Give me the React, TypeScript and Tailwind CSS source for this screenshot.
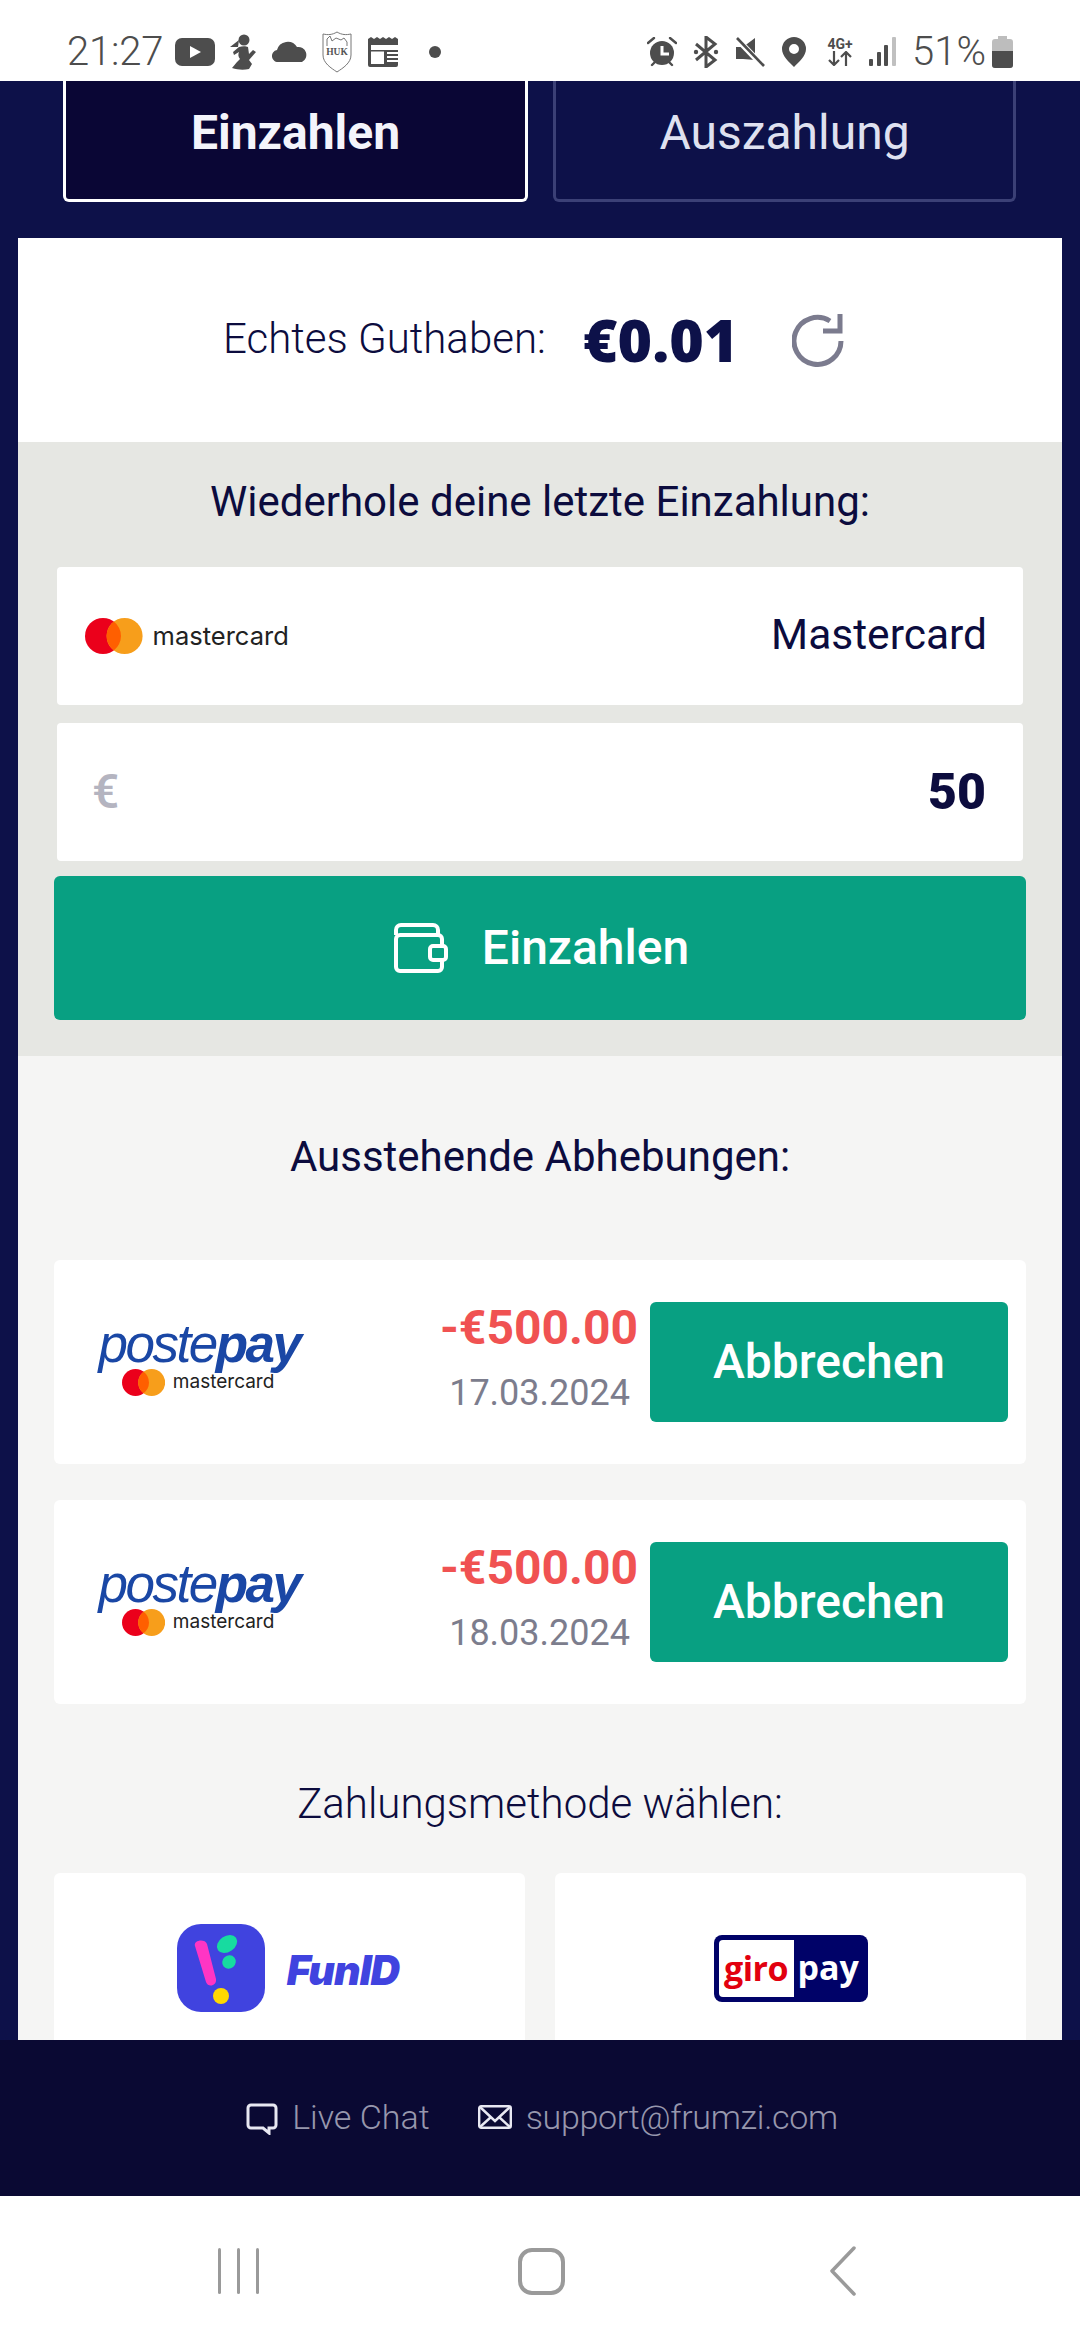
import React from "react";

const G = "#4d4d4d";

function McCircles({ h }: { h: number }) {
  return (
    <svg width={h * 1.6} height={h} viewBox="0 0 32 20" className="shrink-0">
      <circle cx="10" cy="10" r="10" fill="#eb001b" />
      <circle cx="22" cy="10" r="10" fill="#f79e1b" />
      <path d="M16 2a10 10 0 0 1 0 16a10 10 0 0 1 0-16z" fill="#ff5f00" />
    </svg>
  );
}

function Postepay() {
  return (
    <div className="w-[206px] flex flex-col items-center font-['Liberation_Sans',sans-serif] mt-[-4px]">
      <div className="italic text-[#1a47a5] text-[53px] leading-[44px] tracking-[-2.5px] whitespace-nowrap mt-[-3px]">
        poste<span className="font-bold">pay</span>
      </div>
      <div className="flex items-center gap-[8px] mt-[3px] ml-[-2px]">
        <McCircles h={27} />
        <span className="font-['Inter',sans-serif] text-[19px] leading-[20px] text-[#222]">mastercard</span>
      </div>
    </div>
  );
}

function Withdrawal({ date }: { date: string }) {
  return (
    <div className="h-[204px] bg-white rounded-[6px] flex items-center pl-[42px] pr-[18px]">
      <Postepay />
      <div className="flex-1 flex flex-col items-end">
        <div className="text-[48px] leading-[52px] font-bold text-[#f05252] mt-[-9px]">-€500.00</div>
        <div className="text-[36px] leading-[42px] text-[#7c7d8d] mt-[18px] mr-[8px]">{date}</div>
      </div>
      <button className="ml-[12px] w-[358px] h-[120px] rounded-[6px] bg-[#08a082] text-white text-[48px] font-medium">
        Abbrechen
      </button>
    </div>
  );
}

function StatusLeft() {
  return (
    <div className="flex items-center">
      <span className="text-[40px] tracking-[-0.2px] text-[#4d4d4d] font-['Roboto',sans-serif] font-light w-[108px] ml-[67px] leading-none">21:27</span>
      <svg width="40" height="28" viewBox="0 0 40 28">
        <rect width="40" height="28" rx="7" fill={G} />
        <path d="M15 8l11 6l-11 6z" fill="#fff" />
      </svg>
      <svg width="28" height="36" viewBox="0 0 28 36" className="ml-[14px]">
        <circle cx="15" cy="6" r="5.5" fill={G} />
        <path d="M10 6L1 13l8 0z" fill={G} />
        <path d="M10 13c3-1 7-1 9 0l1 7l4-4l3 2l-7 8l3 4l-3 5c-5 1-11 1-17-1l5-6l3-3c-2-2-2-5-1-7l-5 3l-1-3z" fill={G} />
      </svg>
      <svg width="36" height="21" viewBox="0 0 36 21" className="ml-[15px]">
        <path d="M7 21a6 6 0 0 1-2-12a11 11 0 0 1 20-3a8 8 0 0 1 5 15z" fill={G} />
      </svg>
      <svg width="30" height="42" viewBox="0 0 30 42" className="ml-[14px]">
        <path d="M15 1c5 3 9 3 14 2v21c0 8-8 13-14 17C9 37 1 32 1 24V3c5 1 9 1 14-2z" fill="#fff" stroke="#777" strokeWidth="1" />
        <path d="M5 15V8l3-3l2 5l4-3l5 2l3-2l3 4v4" fill="none" stroke="#777" strokeWidth="1" />
        <text x="15" y="24" textAnchor="middle" fontSize="9.5" fontWeight="700" fontFamily="Liberation Serif, serif" fill="#555">HUK</text>
      </svg>
      <svg width="33" height="30" viewBox="0 0 33 30" className="ml-[16px]">
        <path d="M0 2l3-2l3 2l3-2l3 2l3-2l3 2l3-2l3 2l3-2l3 2v26a2 2 0 0 1-2 2H2a2 2 0 0 1-2-2z" fill={G} />
        <rect x="3" y="8" width="13" height="19" fill="#fff" />
        <rect x="3" y="8" width="27" height="5" fill="#fff" />
        <path d="M19 15h11v2H19zM19 19h11v2H19zM19 23h11v2H19z" fill="#fff" />
        <rect x="3" y="13" width="27" height="1.5" fill={G} />
      </svg>
      <div className="w-[12px] h-[12px] rounded-full bg-[#4d4d4d] ml-[28px]" />
    </div>
  );
}

function StatusRight() {
  return (
    <div className="flex items-center mr-[67px]">
      <svg width="30" height="30" viewBox="0 0 30 30">
        <circle cx="15" cy="16" r="12" fill={G} />
        <path d="M1 6l6-5M29 6l-6-5M5 28l3-3M25 28l-3-3" stroke={G} strokeWidth="2.4" strokeLinecap="round" />
        <path d="M15 9v8h7" stroke="#fff" strokeWidth="3" fill="none" />
      </svg>
      <svg width="26" height="32" viewBox="0 0 26 32" className="ml-[16px]">
        <path d="M3 8l19 16l-9 7V1l9 7L3 24" fill="none" stroke={G} strokeWidth="3" />
        <circle cx="3" cy="16" r="2.2" fill={G} />
        <circle cx="23" cy="16" r="2.2" fill={G} />
      </svg>
      <svg width="30" height="30" viewBox="0 0 30 30" className="ml-[16px]">
        <path d="M1 10h7L20 1v22L8 22H1z" fill={G} />
        <path d="M3 3l25 26" stroke="#fff" strokeWidth="6" />
        <path d="M2 1l27 28" stroke={G} strokeWidth="2.6" />
      </svg>
      <svg width="24" height="30" viewBox="0 0 24 30" className="ml-[17px]">
        <path fillRule="evenodd" d="M12 0a12 12 0 0 1 12 12c0 7-7 13-12 18C7 25 0 19 0 12A12 12 0 0 1 12 0zm0 7a5 5 0 1 0 0 10a5 5 0 0 0 0-10z" fill={G} />
      </svg>
      <div className="flex flex-col items-center ml-[18px] w-[32px]">
        <span className="text-[14px] leading-[14px] font-bold text-[#4d4d4d] font-['Roboto',sans-serif]">4G+</span>
        <svg width="26" height="15" viewBox="0 0 26 15">
          <path d="M7 0v13M2 9l5 5l5-5M19 15V2M14 6l5-5l5 5" fill="none" stroke={G} strokeWidth="2.2" />
        </svg>
      </div>
      <svg width="27" height="29" viewBox="0 0 27 29" className="ml-[13px]">
        <rect x="0" y="22" width="4" height="7" rx="1" fill={G} />
        <rect x="8" y="15" width="4" height="14" rx="1" fill={G} />
        <rect x="15" y="8" width="4" height="21" rx="1" fill={G} />
        <rect x="23" y="0" width="4" height="29" rx="1" fill="#c0c0c0" />
      </svg>
      <span className="text-[40px] leading-none text-[#4d4d4d] font-['Roboto',sans-serif] font-light ml-[16px] w-[76px]">51%</span>
      <svg width="21" height="32" viewBox="0 0 21 32" className="ml-[4px]">
        <path d="M6 0h9v3h3a3 3 0 0 1 3 3v23a3 3 0 0 1-3 3H3a3 3 0 0 1-3-3V6a3 3 0 0 1 3-3h3z" fill="#bdbdbd" />
        <path d="M0 15h21v14a3 3 0 0 1-3 3H3a3 3 0 0 1-3-3z" fill={G} />
      </svg>
    </div>
  );
}

export default function App() {
  return (
    <div className="w-[1080px] h-[2340px] flex flex-col bg-white overflow-hidden font-['Roboto',sans-serif]">
      <div className="h-[81px] shrink-0 bg-white flex items-center justify-between pt-[22px]">
        <StatusLeft />
        <StatusRight />
      </div>

      <div className="flex-1 min-h-0 bg-[#0d1149] flex flex-col">
        <div className="h-[157px] shrink-0 flex gap-[25px] pl-[63px] pr-[64px] items-start">
          <div className="w-[465px] h-[121px] pb-[14px] bg-[#0a0635] border-x-[3px] border-b-[3px] border-white rounded-b-[6px] flex items-center justify-center text-[#f4f4fb] text-[48px] font-bold leading-none">
            Einzahlen
          </div>
          <div className="flex-1 h-[121px] pb-[14px] border-x-[3px] border-b-[3px] border-[#3b4076] rounded-b-[6px] flex items-center justify-center text-[#dfe1f0] text-[48px] leading-none">
            Auszahlung
          </div>
        </div>

        <div className="flex-1 min-h-0 mx-[18px] flex flex-col overflow-hidden">
          <div className="h-[204px] shrink-0 bg-white flex items-center pl-[205px]">
            <span className="text-[42px] font-light text-[#0c0c3e] leading-none w-[360px] mt-[-3px]">Echtes Guthaben:</span>
            <span className="text-[59px] font-black text-[#0d1149] leading-none w-[209px] mt-[-2px] font-['Open_Sans',sans-serif]">€0.01</span>
            <svg width="52" height="54" viewBox="0 0 52 54" className="mt-[1px]" fill="none" stroke="#7b7b8e" strokeWidth="5">
              <path d="M38 7A23.5 23.5 0 1 0 49 27" />
              <path d="M48 0v17H31" fill="none" strokeWidth="5" />
            </svg>
          </div>

          <div className="h-[614px] shrink-0 bg-[#e6e7e3] flex flex-col px-[36px]">
            <div className="h-[125px] shrink-0 flex items-center justify-center text-[42px] text-[#0c0c3e] leading-none pb-[5px]">
              Wiederhole deine letzte Einzahlung:
            </div>
            <div className="h-[138px] shrink-0 mx-[3px] bg-white rounded-[4px] flex items-center justify-between pl-[28px] pr-[36px]">
              <div className="flex items-center gap-[10px] mt-[-1px]">
                <McCircles h={36} />
                <span className="font-['Inter',sans-serif] text-[25.5px] text-[#222] leading-none">mastercard</span>
              </div>
              <span className="text-[42.5px] text-[#0c0c3e] leading-none mt-[-2px]">Mastercard</span>
            </div>
            <div className="h-[138px] shrink-0 mt-[18px] mx-[3px] bg-white rounded-[4px] flex items-center justify-between pl-[35px] pr-[37px]">
              <span className="text-[48px] font-medium text-[#b4b4c0] leading-none">€</span>
              <span className="text-[50px] font-black text-[#0c0c3e] leading-none">50</span>
            </div>
            <button className="h-[144px] shrink-0 mt-[15px] pl-[3px] bg-[#08a082] rounded-[6px] flex items-center justify-center text-white text-[48px] font-medium">
              <svg width="54" height="50" viewBox="0 0 54 50" fill="none" stroke="#fff" strokeWidth="4" className="mr-[34px] mt-[-1px]">
                <path d="M2 12V7a5 5 0 0 1 5-5h32a5 5 0 0 1 5 5v5" />
                <rect x="2" y="12" width="46" height="36" rx="4" />
                <rect x="36" y="23" width="16" height="14" rx="3" fill="#08a082" />
              </svg>
              Einzahlen
            </button>
          </div>

          <div className="flex-1 min-h-0 bg-[#f5f5f4] px-[36px] overflow-hidden">
            <div className="h-[204px] flex items-center justify-center text-[42px] text-[#0c0c3e] leading-none pb-[2px]">
              Ausstehende Abhebungen:
            </div>
            <div className="flex flex-col gap-[36px]">
              <Withdrawal date="17.03.2024" />
              <Withdrawal date="18.03.2024" />
            </div>
            <div className="h-[169px] flex items-center justify-center text-[42px] font-light text-[#0c0c3e] leading-none pt-[30px]">
              Zahlungsmethode wählen:
            </div>
            <div className="grid grid-cols-2 gap-[30px]">
              <div className="h-[204px] bg-white rounded-[6px] flex items-start justify-center pt-[51px] pr-[3px]">
                <svg width="88" height="88" viewBox="0 0 88 88">
                  <rect width="88" height="88" rx="24" fill="#4043df" />
                  <path d="M18 22c-2-6 10-8 12-2l9 35c1 7-8 9-10 3z" fill="#ff35c4" />
                  <ellipse cx="50" cy="20" rx="11" ry="8" transform="rotate(-35 50 20)" fill="#17dba0" />
                  <ellipse cx="52" cy="38" rx="7" ry="6.5" transform="rotate(-40 52 38)" fill="#17dba0" />
                  <circle cx="44" cy="72" r="8" fill="#ffd800" />
                </svg>
                <span className="ml-[22px] mt-[24px] text-[#4043df] text-[41px] leading-[44px] italic font-black font-['Inter',sans-serif] tracking-[-1px]">FunID</span>
              </div>
              <div className="h-[204px] bg-white rounded-[6px] flex items-start justify-center pt-[62px]">
                <div className="w-[154px] h-[67px] rounded-[8px] bg-[#000268] p-[5px] pr-0 flex font-['Open_Sans',sans-serif] font-bold text-[34px] leading-none">
                  <div className="w-[75px] h-[57px] rounded-l-[4px] bg-white text-[#e2000f] flex items-center justify-center tracking-[-0.5px] pb-[2px]">giro</div>
                  <div className="flex-1 text-white flex items-center pl-[4px] pb-[4px]">pay</div>
                </div>
              </div>
            </div>
          </div>
        </div>

        <div className="h-[156px] shrink-0 bg-[#0a0933] flex items-center justify-center text-[34px] text-[#9797ad] leading-none pb-[2px] pl-[4px]">
          <svg width="32" height="32" viewBox="0 0 32 32" fill="none" stroke="#e8e8f2" strokeWidth="3" className="mt-[4px]">
            <path d="M5 2h22a3 3 0 0 1 3 3v17a3 3 0 0 1-3 3h-4v5l-6-5H5a3 3 0 0 1-3-3V5a3 3 0 0 1 3-3z" />
          </svg>
          <span className="ml-[14px] font-light">Live Chat</span>
          <svg width="34" height="24" viewBox="0 0 34 24" fill="none" stroke="#e8e8f2" strokeWidth="2.4" className="ml-[48px]">
            <rect x="1.2" y="1.2" width="31.6" height="21.6" rx="2" />
            <path d="M2 2l15 14L32 2M2 22l11-10M32 22L21 12" />
          </svg>
          <span className="ml-[14px] font-light tracking-[-0.3px]">support@frumzi.com</span>
        </div>
      </div>

      <div className="h-[144px] shrink-0 bg-white flex items-center pt-[6px]">
        <div className="ml-[218px] w-[41px] h-[46px] flex justify-between">
          <div className="w-[3px] h-full bg-[#9a9a9a] rounded-full" />
          <div className="w-[3px] h-full bg-[#9a9a9a] rounded-full" />
          <div className="w-[3px] h-full bg-[#9a9a9a] rounded-full" />
        </div>
        <div className="ml-[259px] w-[47px] h-[47px] border-[4px] border-[#9a9a9a] rounded-[14px]" />
        <svg width="28" height="50" viewBox="0 0 28 50" fill="none" stroke="#9a9a9a" strokeWidth="3.5" strokeLinecap="round" strokeLinejoin="round" className="ml-[264px]">
          <path d="M25 2L3 25l22 23" />
        </svg>
      </div>
    </div>
  );
}
